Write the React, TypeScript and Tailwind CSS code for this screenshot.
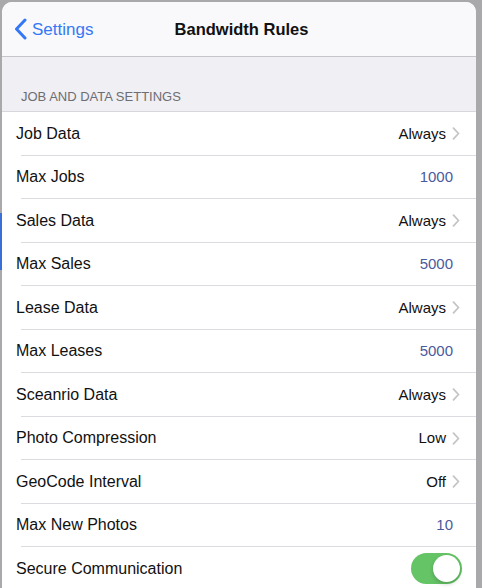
import React from "react";

type Row = { label: string; value?: string; kind: "chevron" | "number" | "toggle" };

const rows: Row[] = [
  { label: "Job Data", value: "Always", kind: "chevron" },
  { label: "Max Jobs", value: "1000", kind: "number" },
  { label: "Sales Data", value: "Always", kind: "chevron" },
  { label: "Max Sales", value: "5000", kind: "number" },
  { label: "Lease Data", value: "Always", kind: "chevron" },
  { label: "Max Leases", value: "5000", kind: "number" },
  { label: "Sceanrio Data", value: "Always", kind: "chevron" },
  { label: "Photo Compression", value: "Low", kind: "chevron" },
  { label: "GeoCode Interval", value: "Off", kind: "chevron" },
  { label: "Max New Photos", value: "10", kind: "number" },
  { label: "Secure Communication", kind: "toggle" },
];

function Chevron() {
  return (
    <svg width="8" height="13" viewBox="0 0 8 13" className="ml-[6px]">
      <path d="M1.5 1.2 L6.5 6.5 L1.5 11.8" fill="none" stroke="#c4c4c7" strokeWidth="1.8" strokeLinecap="round" strokeLinejoin="round" />
    </svg>
  );
}

export default function App() {
  return (
    <div
      className="relative w-[482px] h-[588px] overflow-hidden bg-[#a9a9ab] pl-[2px] pr-[6px] pt-[2px]"
      style={{ fontFamily: '"Liberation Sans", Arial, sans-serif' }}
    >
      <div className="absolute left-0 top-[213px] w-[2px] h-[57px] bg-[#3b6fd8]" />
      <div className="h-full rounded-t-[10px] overflow-hidden bg-white flex flex-col">
        <div className="relative h-[55px] shrink-0 bg-[#f9f9fb] border-b border-[#c6c6ca] flex items-center">
          <div className="flex items-center pl-[12px] text-[#3478f6]">
            <svg width="14" height="22" viewBox="0 0 14 22">
              <path d="M11 2 L2.5 11 L11 20" fill="none" stroke="#3478f6" strokeWidth="3" strokeLinecap="round" strokeLinejoin="round" />
            </svg>
            <span className="ml-[4px] text-[17px] leading-none">Settings</span>
          </div>
          <div className="absolute left-0 right-0 pl-[5px] text-center text-[16.5px] font-bold text-[#111] pointer-events-none">
            Bandwidth Rules
          </div>
        </div>
        <div className="h-[55px] shrink-0 bg-[#efeff4] flex items-end pl-[19px] pb-[5px] border-b border-[#d8d8dc]">
          <span className="text-[13px] text-[#6d6d72]">JOB AND DATA SETTINGS</span>
        </div>
        <div className="flex flex-col">
          {rows.map((r, i) => (
            <div key={r.label} className="relative h-[43.5px] shrink-0 flex items-center pl-[14px]">
              <span className="text-[16px] text-[#111]">{r.label}</span>
              <div className="ml-auto flex items-center">
                {r.kind === "chevron" && (
                  <div className="flex items-center pr-[16px]">
                    <span className="text-[15px] text-[#111]">{r.value}</span>
                    <Chevron />
                  </div>
                )}
                {r.kind === "number" && (
                  <span className="text-[15px] text-[#4b5a9b] pr-[23px]">{r.value}</span>
                )}
                {r.kind === "toggle" && (
                  <div className="mr-[14px] w-[51px] h-[31px] rounded-full bg-[#65c466] flex items-center justify-end pr-[2px]">
                    <div className="w-[27px] h-[27px] rounded-full bg-white shadow-[0_2px_4px_rgba(0,0,0,0.2)]" />
                  </div>
                )}
              </div>
              {i < rows.length - 1 && (
                <div className="absolute left-[19px] right-0 bottom-0 h-px bg-[#dcdce0]" />
              )}
            </div>
          ))}
        </div>
      </div>
    </div>
  );
}
